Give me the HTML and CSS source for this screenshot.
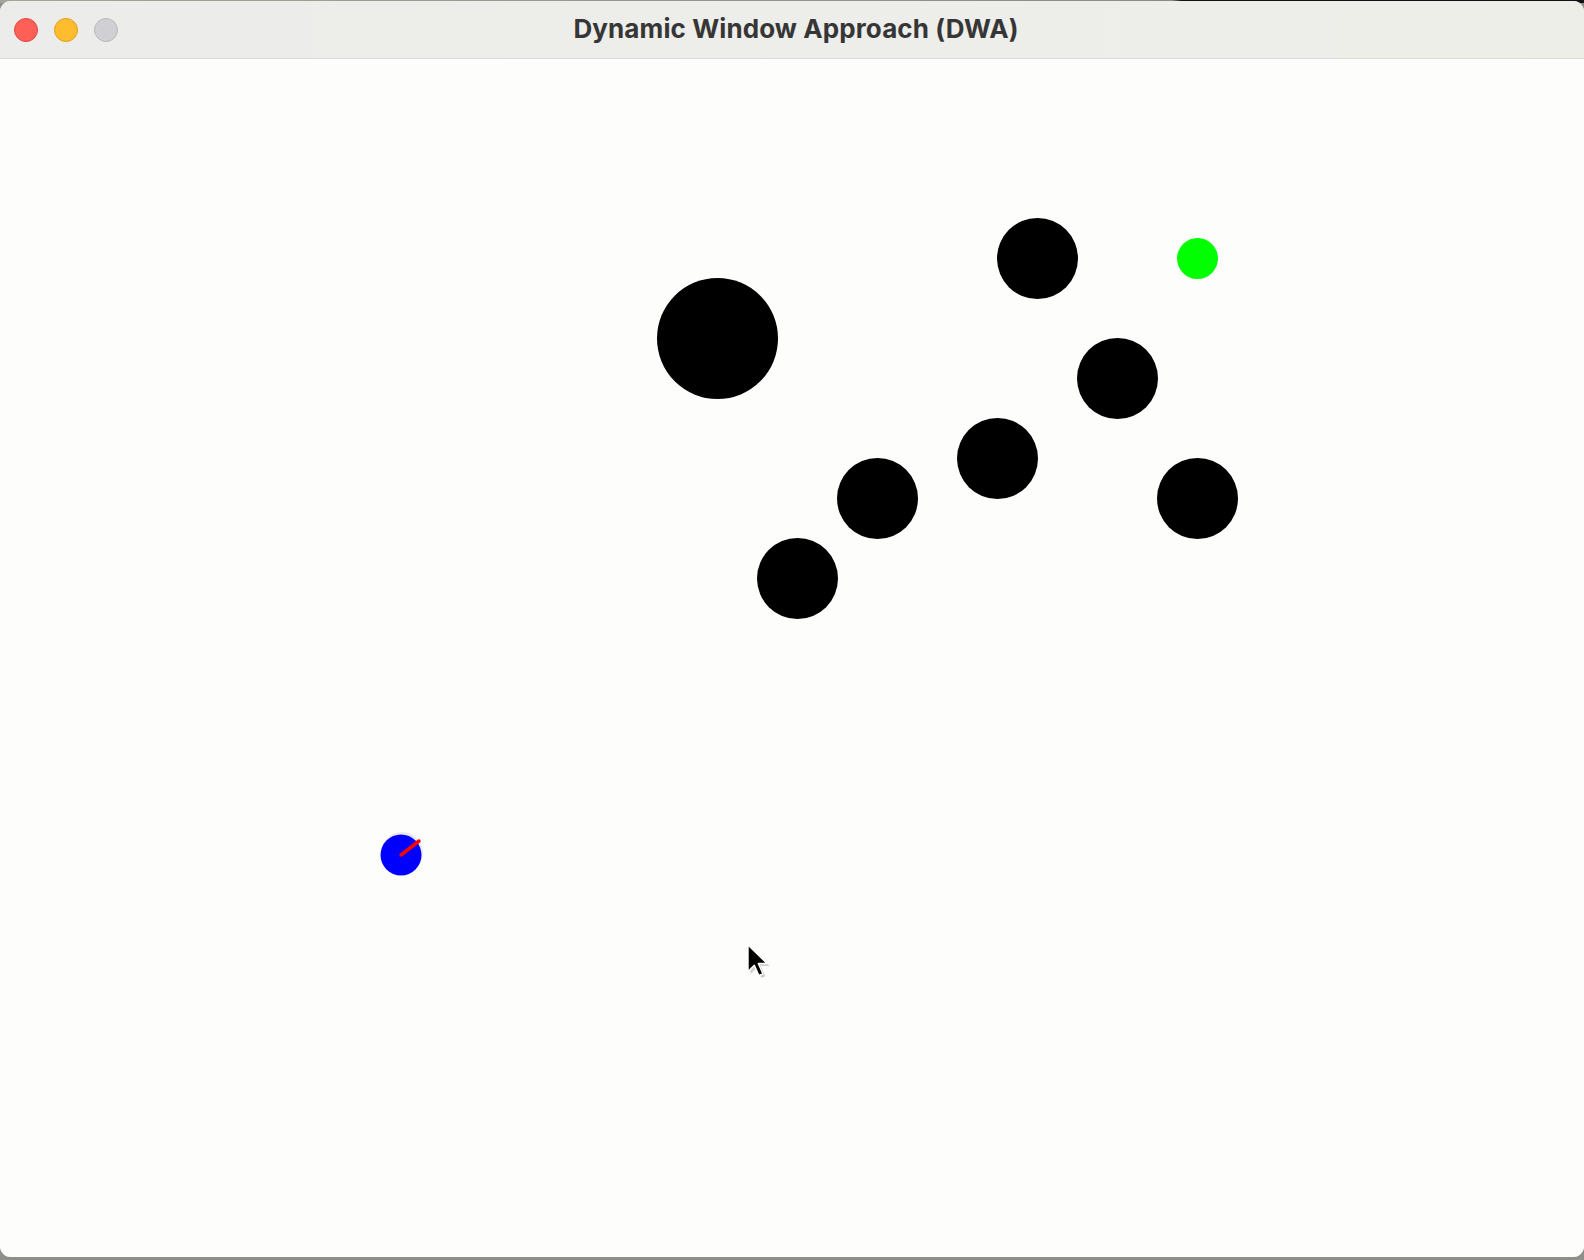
FILE: index.html
```html
<!DOCTYPE html>
<html lang="en">
<head>
<meta charset="utf-8">
<title>Dynamic Window Approach (DWA)</title>
<link rel="stylesheet" href="styles.css">
</head>
<body>
<div class="desktop">
  <div class="window">
    <div class="titlebar">
      <div class="lights">
        <span class="light close"></span>
        <span class="light min"></span>
        <span class="light zoom"></span>
      </div>
      <div class="title">Dynamic Window Approach (DWA)</div>
    </div>
    <div class="canvas">
      <svg class="scene" width="1584" height="1199" viewBox="0 0 1584 1199" xmlns="http://www.w3.org/2000/svg">
        <circle cx="717.5" cy="279.5" r="60.5" fill="#000"/>
        <circle cx="1037.5" cy="199.5" r="40.5" fill="#000"/>
        <circle cx="1117.5" cy="319.5" r="40.5" fill="#000"/>
        <circle cx="997.5" cy="399.5" r="40.5" fill="#000"/>
        <circle cx="877.5" cy="439.5" r="40.5" fill="#000"/>
        <circle cx="1197.5" cy="439.5" r="40.5" fill="#000"/>
        <circle cx="797.5" cy="519.5" r="40.5" fill="#000"/>
        <circle cx="1197.5" cy="199.5" r="20.5" fill="#00ff00"/>
        <circle cx="402" cy="794" r="21" fill="#d6d6dc" opacity="0.5"/>
        <circle cx="401" cy="796" r="20.5" fill="#0000ff"/>
        <line x1="401" y1="796" x2="419" y2="782" stroke="#ff0000" stroke-width="3.5" stroke-linecap="round"/>
      </svg>
    </div>
    <svg class="cursor" width="26" height="38" viewBox="0 0 26 38" xmlns="http://www.w3.org/2000/svg">
      <path d="M3.5 3.5 L3.5 30 L9.8 23.7 L14.4 34 L18.4 32.3 L13.8 22 L22.5 22 Z" fill="#8a8a8a" opacity="0.4"/>
      <path d="M1 1 L1 27.5 L7.3 21.2 L11.9 31.5 L15.9 29.8 L11.3 19.5 L20 19.5 Z" fill="#000" stroke="#fff" stroke-width="1.4" stroke-linejoin="round"/>
    </svg>
  </div>
</div>
</body>
</html>
```

FILE: styles.css
```css
html, body {
  margin: 0;
  padding: 0;
}

body {
  width: 1584px;
  height: 1260px;
  overflow: hidden;
  background: #8f8f8a;
  font-family: "Inter", "Liberation Sans", sans-serif;
}

.desktop {
  width: 1584px;
  height: 1260px;
  padding-top: 1px;
  box-sizing: border-box;
  background:
    linear-gradient(90deg, #a4a49a 0%, #8c8c84 74%, #111 74.6%, #111 100%) top left / 100% 3px no-repeat,
    #8f8f8a;
}

.window {
  position: relative;
  width: 1584px;
  height: 1256px;
  border-radius: 11px;
  overflow: hidden;
  background: #fdfdfb;
  display: flex;
  flex-direction: column;
  box-shadow: inset 0 0 0 1px #c9c9c9;
}

.titlebar {
  height: 57px;
  flex: 0 0 57px;
  background: linear-gradient(90deg, #ececea 0%, #ededea 40%, #eeeee9 100%);
  border-bottom: 1px solid #dadad6;
  display: flex;
  align-items: center;
  position: relative;
}

.lights {
  display: flex;
  gap: 16px;
  padding-left: 14px;
  padding-top: 1px;
}

.light {
  width: 24px;
  height: 24px;
  border-radius: 50%;
  box-sizing: border-box;
}

.light.close {
  background: #fe5f57;
  border: 1px solid #e2463f;
}

.light.min {
  background: #febc2e;
  border: 1px solid #e1a116;
}

.light.zoom {
  background: #cfcfd4;
  border: 1px solid #b9b9c0;
}

.title {
  position: absolute;
  left: 0;
  right: 0;
  top: 0;
  height: 57px;
  display: flex;
  align-items: center;
  justify-content: center;
  padding-left: 8px;
  padding-bottom: 3px;
  box-sizing: border-box;
  font-size: 26px;
  font-weight: 700;
  color: #363636;
  letter-spacing: 0.1px;
}

.canvas {
  flex: 1;
  background: #fdfdfb;
}

.scene {
  display: block;
}

.cursor {
  position: absolute;
  left: 747px;
  top: 943px;
}
```
